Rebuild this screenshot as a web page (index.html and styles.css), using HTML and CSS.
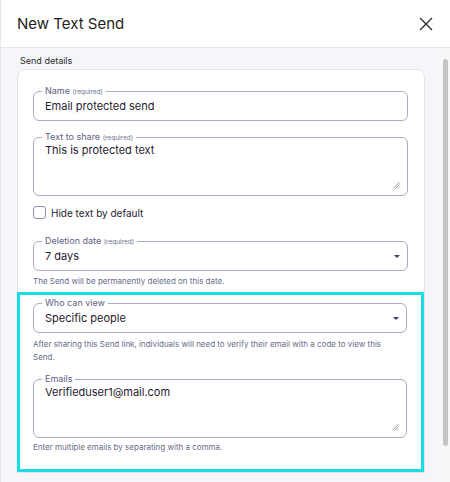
FILE: index.html
```html
<!DOCTYPE html>
<html>
<head>
<meta charset="utf-8">
<link rel="stylesheet" href="styles.css">
</head>
<body>
<div class="dialog">
  <header class="header">
    <h1 class="title">New Text Send</h1>
    <svg class="close" width="14" height="14" viewBox="0 0 14 14"><path d="M1 1L13 13M13 1L1 13" stroke="#2b2b2b" stroke-width="1.3" fill="none"/></svg>
  </header>
  <div class="body">
    <div class="main">
      <div class="section-title">Send details</div>
      <div class="card">
        <div class="field f-name">
          <span class="label">Name <small>(required)</small></span>
          <span class="value">Email protected send</span>
        </div>
        <div class="field area f-text">
          <span class="label">Text to share <small>(required)</small></span>
          <span class="value">This is protected text</span>
          <svg class="grip" width="8" height="8" viewBox="0 0 8 8"><path d="M7.5 1L1 7.5M7.5 3.5L3.5 7.5M7.5 6L6 7.5" stroke="#8a8a8a" stroke-width="0.9"/></svg>
        </div>
        <div class="check-row">
          <span class="checkbox"></span>
          <span class="check-label">Hide text by default</span>
        </div>
        <div class="field select f-del">
          <span class="label">Deletion date <small>(required)</small></span>
          <span class="value">7 days</span>
          <span class="caret"></span>
        </div>
        <div class="help h-del">The Send will be permanently deleted on this date.</div>
        <div class="highlight">
          <div class="field select f-who">
            <span class="label">Who can view</span>
            <span class="value">Specific people</span>
            <span class="caret"></span>
          </div>
          <div class="help h-who">After sharing this Send link, individuals will need to verify their email with a code to view this Send.</div>
          <div class="field area f-emails">
            <span class="label">Emails</span>
            <span class="value">Verifieduser1@mail.com</span>
            <svg class="grip" width="8" height="8" viewBox="0 0 8 8"><path d="M7.5 1L1 7.5M7.5 3.5L3.5 7.5M7.5 6L6 7.5" stroke="#8a8a8a" stroke-width="0.9"/></svg>
          </div>
          <div class="help h-emails">Enter multiple emails by separating with a comma.</div>
        </div>
      </div>
    </div>
    <div class="scrollbar"><div class="thumb"></div></div>
  </div>
</div>
</body>
</html>
```

FILE: styles.css
```css
* { box-sizing: border-box; }
html, body { margin: 0; padding: 0; }
body {
  width: 450px;
  height: 482px;
  overflow: hidden;
  font-family: Inter, "Noto Sans", sans-serif;
  background: #ffffff;
}
.dialog {
  height: 482px;
  display: flex;
  flex-direction: column;
  border-left: 1px solid #e8e9ee;
}
.header {
  height: 48px;
  flex: none;
  display: flex;
  align-items: center;
  justify-content: space-between;
  padding: 0 17px 0 16px;
  border-bottom: 1px solid #e6e7ec;
  background: #fff;
}
.title {
  margin: 0;
  font-size: 15px;
  font-weight: 400;
  color: #1e1e1e;
}
.close { display: block; }
.body {
  flex: 1;
  display: flex;
  background: #f5f6f9;
  overflow: hidden;
}
.main {
  flex: 1;
  padding: 7px 12px 0 16px;
  overflow: hidden;
}
.section-title {
  font-size: 9px;
  line-height: 12px;
  color: #2c2c2c;
  padding-left: 3px;
  margin-bottom: 2px;
}
.card {
  background: #fff;
  border: 1px solid #e3e4ea;
  border-radius: 8px 8px 0 0;
  padding: 21px 16px 0 15px;
}
.field {
  position: relative;
  border: 1px solid #a9abbe;
  border-radius: 6px;
  height: 30px;
  padding: 0 11px;
  display: flex;
  align-items: center;
}
.field.area {
  height: 59px;
  align-items: flex-start;
  padding-top: 5px;
}
.label {
  position: absolute;
  top: -7px;
  left: 8px;
  padding: 0 3px;
  background: #fff;
  font-size: 9px;
  line-height: 12px;
  color: #5d6183;
  white-space: nowrap;
}
.label small {
  font-size: 6.5px;
  color: #6b6f8c;
}
.value {
  font-size: 11px;
  line-height: 14px;
  color: #1f2130;
}
.grip {
  position: absolute;
  right: 7px;
  bottom: 6px;
}
.caret {
  position: absolute;
  right: 7px;
  top: 13px;
  width: 0;
  height: 0;
  border-left: 3px solid transparent;
  border-right: 3px solid transparent;
  border-top: 3px solid #3b406a;
}
.f-name { margin-bottom: 16px; }
.f-text { margin-bottom: 10px; }
.check-row {
  display: flex;
  align-items: center;
  height: 13px;
  margin-bottom: 22px;
}
.checkbox {
  width: 13px;
  height: 13px;
  border: 1px solid #8e91a8;
  border-radius: 3px;
  margin-right: 5px;
  background: #fff;
}
.check-label {
  font-size: 10px;
  color: #1f2130;
}
.help {
  font-size: 8px;
  line-height: 13px;
  color: #686c89;
}
.h-del { margin-top: 4px; margin-bottom: 4px; }
.highlight {
  margin: 0 -16px 0 -16px;
  border: 3px solid #19dde6;
  padding: 8px 14px 15px 13px;
}
.h-who { margin-top: 5px; margin-bottom: 15px; max-width: 355px; }
.h-emails { margin-top: 3px; }
.scrollbar {
  width: 13px;
  flex: none;
  background: #f7f7f8;
  padding: 11px 2px 0 6px;
}
.thumb {
  width: 5px;
  height: 387px;
  border-radius: 3px;
  background: #c4c4c6;
}
```
